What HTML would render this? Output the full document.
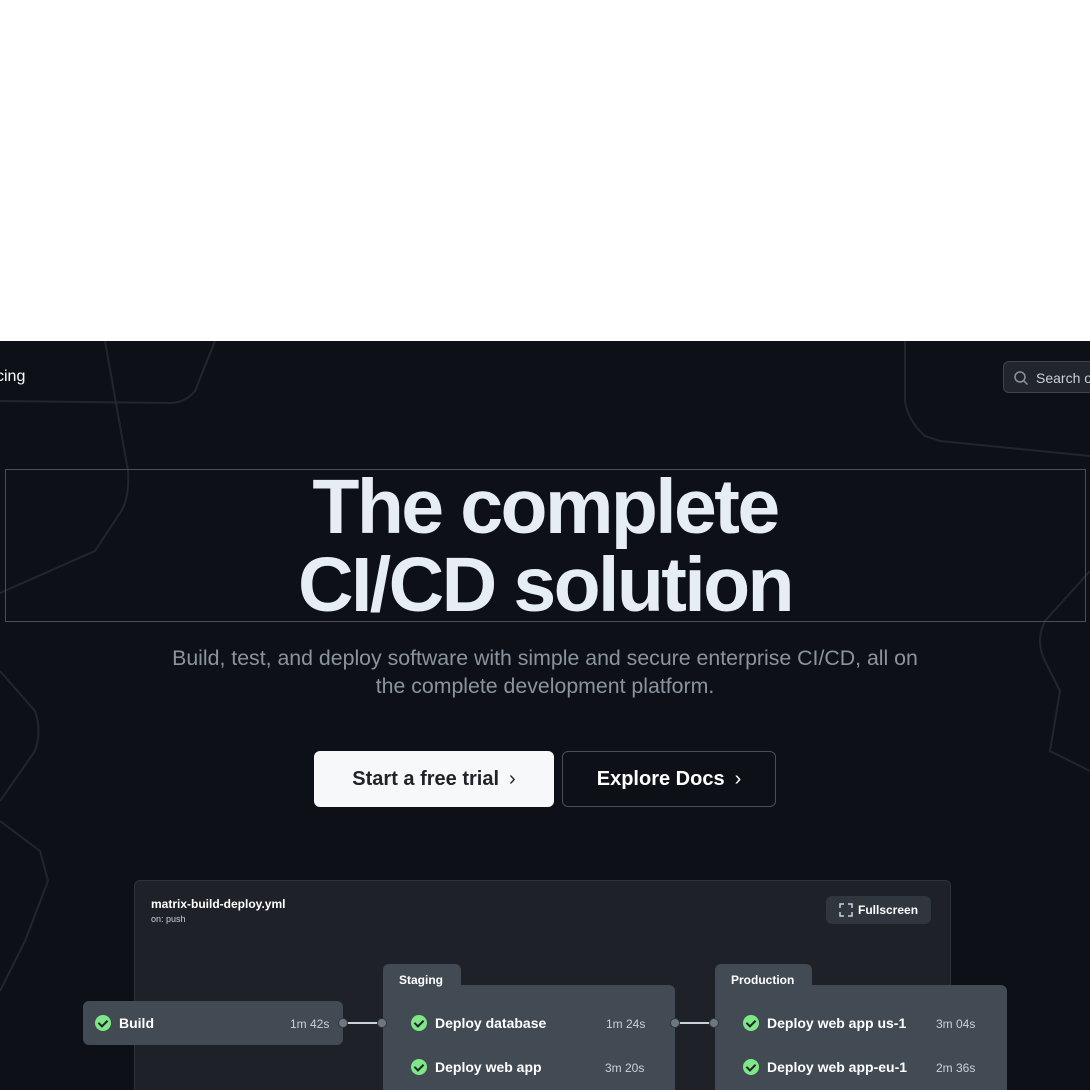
<!DOCTYPE html>
<html><head><meta charset="utf-8"><style>
*{margin:0;padding:0;box-sizing:border-box}
body{width:1090px;height:1090px;overflow:hidden;background:#fff;font-family:"Liberation Sans",sans-serif;position:relative}
.dark{position:absolute;left:0;top:341px;width:1090px;height:749px;background:#0d1117;overflow:hidden}
.abs{position:absolute}
.h1{position:absolute;left:0;width:1090px;text-align:center;color:#e6edf3;font-weight:700;font-size:77px;letter-spacing:-2.6px;line-height:76px}
.sub{position:absolute;left:0;width:1090px;text-align:center;color:#8b949e;font-size:21.3px;line-height:28px}
.btn{position:absolute;height:56px;border-radius:6px;font-weight:700;font-size:20px;display:flex;align-items:center;justify-content:center;gap:10px}
.node{position:absolute;background:#424a53;border-radius:6px;color:#fff;font-size:14px}
.row{position:absolute;display:flex;align-items:center;font-size:14px;font-weight:700;color:#fff}
.ck{width:16px;height:16px;border-radius:50%;background:#7ee787;margin-right:8px;position:relative}
.ck:after{content:"";position:absolute;left:5px;top:3px;width:4px;height:7px;border:solid #1f2328;border-width:0 2px 2px 0;transform:rotate(45deg)}
.t{position:absolute;font-size:12px;color:#c9d1d9;font-weight:400}
.dot{position:absolute;width:10px;height:10px;border-radius:50%;background:#6e7681;border:1px solid #30363d}
</style></head><body>
<div class="dark">
<svg class="abs" style="left:0;top:0" width="1090" height="749" fill="none" stroke="#21262d" stroke-width="2">
<path d="M105 0 L128 130 Q130 160 118 175 L95 210 L0 252"/>
<path d="M0 60 L170 62 Q185 62 195 50 L215 0"/>
<path d="M905 0 L905 60 Q908 80 925 95 L940 100 L1090 115"/>
<path d="M1090 230 L1045 280 Q1035 300 1045 320 L1060 350 L1050 410 L1090 430"/>
<path d="M0 330 L35 370 Q42 390 35 410 L0 460"/>
<path d="M0 480 L40 510 L48 540 L25 600 L0 650"/>
</svg>
<div class="abs" style="left:-4px;top:27px;color:#fff;font-size:16px">cing</div>
<div class="abs" style="left:1003px;top:20px;width:100px;height:32px;border:1px solid #3d444d;background:#21262d;border-radius:6px;color:#c9d1d9;font-size:14px;padding:8px 0 0 32px">Search o
<svg class="abs" style="left:9px;top:8px" width="16" height="16" fill="none" stroke="#8b949e" stroke-width="1.5"><circle cx="7" cy="7" r="5"/><path d="M11 11l3.5 3.5"/></svg></div>
<div class="abs" style="left:5px;top:128px;width:1081px;height:153px;border:1px solid #484f58"></div>
<div class="h1" style="top:128px">The complete</div>
<div class="h1" style="top:206px">CI/CD solution</div>
<div class="sub" style="top:303px">Build, test, and deploy software with simple and secure enterprise CI/CD, all on<br>the complete development platform.</div>
<div class="btn" style="left:314px;top:410px;width:240px;background:#f6f8fa;color:#1f2328">Start a free trial <span style="font-weight:400">&#x203A;</span></div>
<div class="btn" style="left:562px;top:410px;width:214px;border:1px solid #484f58;color:#fff">Explore Docs <span style="font-weight:400">&#x203A;</span></div>
<div class="abs" style="left:134px;top:539px;width:817px;height:260px;background:#1e2228;border:1px solid #2d333b;border-radius:6px"></div>
<div class="abs" style="left:151px;top:556px;color:#fff;font-size:12px;font-weight:700">matrix-build-deploy.yml</div>
<div class="abs" style="left:151px;top:573px;color:#c9d1d9;font-size:9px">on: push</div>
<div class="abs" style="left:826px;top:555px;width:105px;height:28px;background:#30363d;border-radius:6px;color:#fff;font-size:12px;font-weight:700;padding:7px 0 0 32px">Fullscreen
<svg class="abs" style="left:13px;top:7px" width="14" height="14" fill="none" stroke="#c9d1d9" stroke-width="1.5"><path d="M1 5V1h4M9 1h4v4M13 9v4H9M5 13H1V9"/></svg></div>
<div class="node" style="left:83px;top:660px;width:260px;height:44px"></div>
<div class="row" style="left:95px;top:674px"><div class="ck"></div>Build</div><div class="t" style="left:290px;top:676px">1m 42s</div>
<div class="node" style="left:383px;top:623px;width:78px;height:30px;border-radius:6px 6px 0 0"></div>
<div class="node" style="left:383px;top:644px;width:292px;height:120px"></div>
<div class="abs" style="left:399px;top:632px;color:#fff;font-size:12px;font-weight:700">Staging</div>
<div class="row" style="left:411px;top:674px"><div class="ck"></div>Deploy database</div><div class="t" style="left:606px;top:676px">1m 24s</div>
<div class="row" style="left:411px;top:718px"><div class="ck"></div>Deploy web app</div><div class="t" style="left:605px;top:720px">3m 20s</div>
<div class="node" style="left:715px;top:623px;width:97px;height:30px;border-radius:6px 6px 0 0"></div>
<div class="node" style="left:715px;top:644px;width:292px;height:120px"></div>
<div class="abs" style="left:731px;top:632px;color:#fff;font-size:12px;font-weight:700">Production</div>
<div class="row" style="left:743px;top:674px"><div class="ck"></div>Deploy web app us-1</div><div class="t" style="left:936px;top:676px">3m 04s</div>
<div class="row" style="left:743px;top:718px"><div class="ck"></div>Deploy web app-eu-1</div><div class="t" style="left:936px;top:720px">2m 36s</div>
<div class="abs" style="left:343px;top:681px;width:40px;height:2px;background:#c9d1d9"></div>
<div class="abs" style="left:675px;top:681px;width:40px;height:2px;background:#c9d1d9"></div>
<div class="dot" style="left:338px;top:677px"></div><div class="dot" style="left:377px;top:677px"></div>
<div class="dot" style="left:670px;top:677px"></div><div class="dot" style="left:709px;top:677px"></div>
</div>
</body></html>
